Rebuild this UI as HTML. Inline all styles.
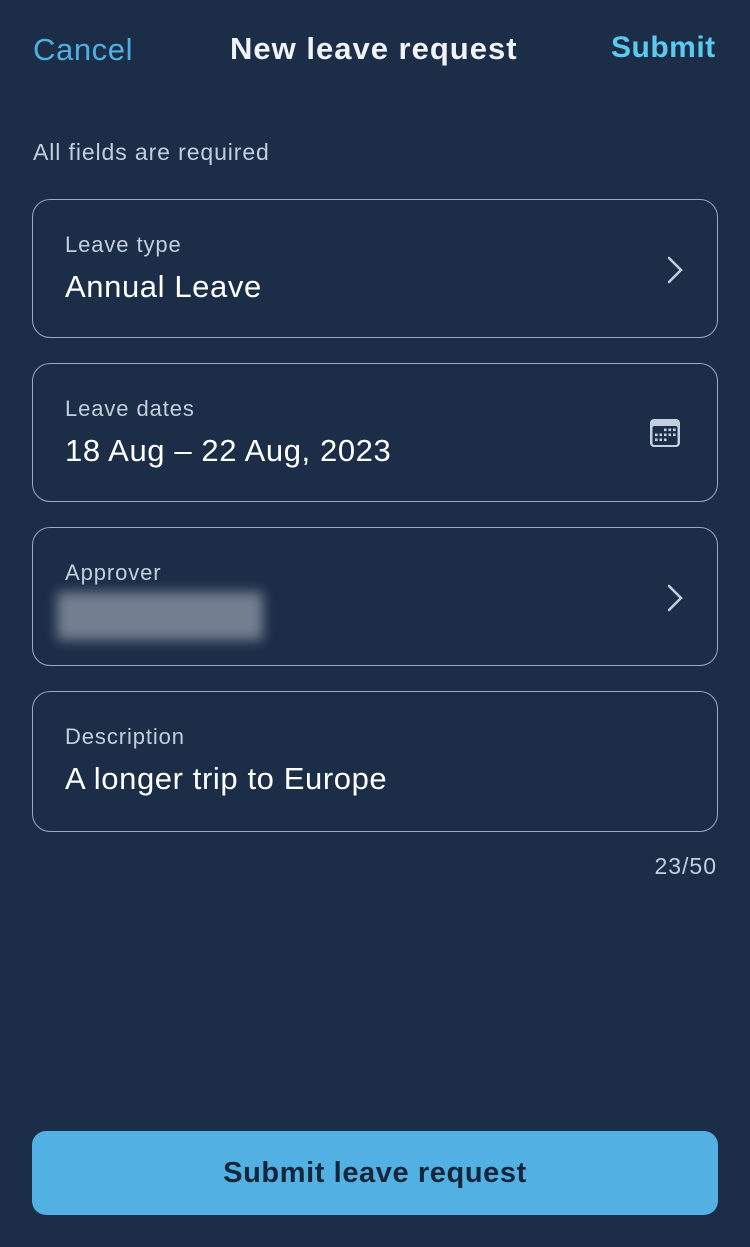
<!DOCTYPE html>
<html><head><style>
body{margin:0;width:750px;height:1247px;background:#1b2d47;font-family:"Liberation Sans",sans-serif;position:relative;overflow:hidden}
.a{position:absolute;white-space:nowrap}
.card{position:absolute;left:32px;width:686px;height:137px;border:1px solid #9aaabf;border-radius:18px;box-sizing:border-box}
.lbl{position:absolute;left:32px;top:32px;font-size:22px;color:#c3cfdd;letter-spacing:0.9px}
.val{position:absolute;left:32px;top:69px;font-size:31px;color:#fff;letter-spacing:0.6px}
.ic{position:absolute;right:32px;top:55px}
</style></head><body>
<div class="a" style="left:33px;top:32px;font-size:31px;color:#4fb0e3;letter-spacing:0.6px">Cancel</div>
<div class="a" style="left:230px;top:31px;font-size:31px;color:#f0f3f7;font-weight:bold;letter-spacing:1px">New leave request</div>
<div class="a" style="left:611px;top:31px;font-size:30px;color:#5ccaf0;font-weight:bold;letter-spacing:0.5px">Submit</div>
<div class="a" style="left:33px;top:139px;font-size:23px;color:#c3cfdd;letter-spacing:0.9px">All fields are required</div>

<div class="card" style="top:199px;height:139px"><div class="lbl">Leave type</div><div class="val">Annual Leave</div>
<svg class="ic" width="20" height="30" viewBox="0 0 20 30"><path d="M4 3L16 15L4 27" stroke="#c3cfdd" stroke-width="2.5" fill="none" stroke-linecap="round"/></svg></div>

<div class="card" style="top:363px;height:139px"><div class="lbl">Leave dates</div><div class="val">18 Aug – 22 Aug, 2023</div>
<svg class="ic" style="right:36px;top:54px" width="32" height="30" viewBox="0 0 32 30"><rect x="1" y="1" width="30" height="28" rx="4" fill="#c3cfdd"/><rect x="3.5" y="8" width="25" height="19" rx="2" fill="#1b2d47"/><g fill="#c3cfdd"><rect x="15" y="10.5" width="2.6" height="2.6"/><rect x="19.5" y="10.5" width="2.6" height="2.6"/><rect x="24" y="10.5" width="2.6" height="2.6"/><rect x="6" y="15.5" width="2.6" height="2.6"/><rect x="10.5" y="15.5" width="2.6" height="2.6"/><rect x="15" y="15.5" width="2.6" height="2.6"/><rect x="19.5" y="15.5" width="2.6" height="2.6"/><rect x="24" y="15.5" width="2.6" height="2.6"/><rect x="6" y="20.5" width="2.6" height="2.6"/><rect x="10.5" y="20.5" width="2.6" height="2.6"/><rect x="15" y="20.5" width="2.6" height="2.6"/></g></svg></div>

<div class="card" style="top:527px;height:139px"><div class="lbl">Approver</div>
<div style="position:absolute;left:24px;top:64px;width:206px;height:48px;background:#8a93a2;filter:blur(6px);opacity:.8"></div>
<svg class="ic" width="20" height="30" viewBox="0 0 20 30"><path d="M4 3L16 15L4 27" stroke="#c3cfdd" stroke-width="2.5" fill="none" stroke-linecap="round"/></svg></div>

<div class="card" style="top:691px;height:141px"><div class="lbl">Description</div><div class="val">A longer trip to Europe</div></div>
<div class="a" style="right:33px;top:853px;font-size:23px;color:#c3cfdd;letter-spacing:1px">23/50</div>

<div class="a" style="left:32px;top:1131px;width:686px;height:84px;background:#52b0e3;border-radius:14px;text-align:center;line-height:84px;font-size:29px;font-weight:bold;color:#15253a;letter-spacing:0.6px">Submit leave request</div>
</body></html>
